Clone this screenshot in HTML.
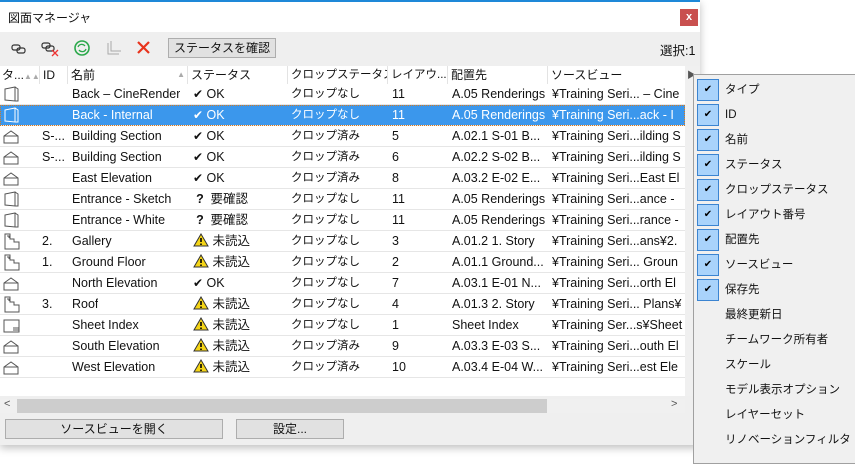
<!DOCTYPE html>
<html><head><meta charset="utf-8"><style>
*{box-sizing:border-box;margin:0;padding:0}
body{width:855px;height:455px;overflow:hidden;background:#fff;font-family:"Liberation Sans","Noto Sans CJK JP",sans-serif;font-size:12.5px;color:#111;position:relative}
.win{position:absolute;left:0;top:0;width:700px;height:445px;background:#efefef;border-top:2px solid #1e88d8;box-shadow:0 3px 8px rgba(0,0,0,.25)}
.title{position:absolute;left:0;top:0;width:700px;height:30px;background:#fff}
.title span{position:absolute;left:8px;top:7px;font-size:12px}
.close{position:absolute;left:680px;top:7px;width:18px;height:17px;background:#c9504f;color:#fff;font-size:11px;text-align:center;line-height:16px;font-weight:bold}
.btn{position:absolute;background:#e1e1e1;border:1px solid #adadad;text-align:center;font-size:12px}
.grid{position:absolute;left:0;top:64px;width:700px;height:330px;background:#fff}
.hdr{position:absolute;top:0;height:18px;font-size:12px;line-height:18px;border-right:1px solid #e3e3e3;padding-left:3px;white-space:nowrap;overflow:hidden}
.row{position:absolute;left:0;width:685px;height:21px;border-bottom:1px solid #e6e6e6}
.row div{position:absolute;top:0;line-height:20px;white-space:nowrap;overflow:hidden;font-size:12.5px}
.sel{background:#3b97ec;color:#fff;outline:1px dotted #d67a20;outline-offset:-1px}
.menu{position:absolute;left:693px;top:74px;width:170px;height:390px;background:#f0f0f0;border:1px solid #a0a0a0}
.mi{position:absolute;left:31px;font-size:11.5px;line-height:22px}
.cb{position:absolute;left:3px;width:22px;height:22px;background:#a9d3fb;border:1px solid #3b84d1;text-align:center;line-height:20px;font-size:10px;color:#000}
</style></head><body>
<div class="win">
<div class="title"><span>図面マネージャ</span><div class="close">x</div></div>
<svg style="position:absolute;left:8px;top:36px" width="150" height="20">
<g fill="none" stroke="#333" stroke-width="1.2"><rect x="4" y="7" width="8" height="5" rx="2"/><rect x="9" y="10" width="8" height="5" rx="2"/>
<rect x="34" y="5" width="8" height="5" rx="2"/><rect x="38" y="8" width="8" height="5" rx="2"/></g>
<path d="M44 12l6 6M50 12l-6 6" stroke="#e33" stroke-width="1.3"/>
<circle cx="74" cy="10" r="7" fill="none" stroke="#2aa84a" stroke-width="1.6"/><path d="M70 9a4 4 0 0 1 7-1M78 11a4 4 0 0 1-7 1" stroke="#2aa84a" stroke-width="1.3" fill="none"/>
<path d="M100 5v11h11M103 3v10h10" stroke="#aaa" fill="none"/>
<path d="M130 4l11 11M141 4l-11 11" stroke="#e8331c" stroke-width="2.2"/></svg>
<div class="btn" style="left:168px;top:36px;width:108px;height:20px;line-height:18px">ステータスを確認</div>
<div style="position:absolute;left:660px;top:38px">選択:1</div>
<div class="grid">
<div class="hdr" style="left:0;width:40px;padding-left:2px">タ...<span style="color:#aaa;font-size:8px">▲▲</span></div>
<div class="hdr" style="left:40px;width:28px">ID</div>
<div class="hdr" style="left:68px;width:120px">名前<span style="position:absolute;right:2px;color:#aaa;font-size:8px">▲</span></div>
<div class="hdr" style="left:188px;width:100px">ステータス</div>
<div class="hdr" style="left:288px;width:100px;font-size:11.5px">クロップステータス</div>
<div class="hdr" style="left:388px;width:60px;font-size:11.5px">レイアウ...</div>
<div class="hdr" style="left:448px;width:100px">配置先</div>
<div class="hdr" style="left:548px;width:137px;border:none">ソースビュー</div>
<div style="position:absolute;left:685px;top:0;width:15px;height:330px;background:#f0f0f0"></div>
<div style="position:absolute;left:687px;top:2px;font-size:9px;color:#555">▶</div>
</div>
<div id="rows" style="position:absolute;left:0;top:82px"></div>
<div style="position:absolute;left:0;top:397px;width:685px;height:14px;background:#f0f0f0"></div>
<div style="position:absolute;left:17px;top:397px;width:530px;height:14px;background:#cdcdcd"></div>
<div style="position:absolute;left:4px;top:396px;font-size:11px;color:#555">&lt;</div>
<div style="position:absolute;left:671px;top:396px;font-size:11px;color:#555">&gt;</div>
<div class="btn" style="left:5px;top:417px;width:218px;height:20px;line-height:18px">ソースビューを開く</div>
<div class="btn" style="left:236px;top:417px;width:108px;height:20px;line-height:18px">設定...</div>
</div>
<div class="menu" id="menu"></div>
<script>
var R=[["c","","Back – CineRender","ok","クロップなし","11","A.05 Renderings","¥Training Seri... – Cine"],
["c","","Back - Internal","ok","クロップなし","11","A.05 Renderings","¥Training Seri...ack - I"],
["h","S-...","Building Section","ok","クロップ済み","5","A.02.1 S-01 B...","¥Training Seri...ilding S"],
["h","S-...","Building Section","ok","クロップ済み","6","A.02.2 S-02 B...","¥Training Seri...ilding S"],
["h","","East Elevation","ok","クロップ済み","8","A.03.2 E-02 E...","¥Training Seri...East El"],
["c","","Entrance - Sketch","q","クロップなし","11","A.05 Renderings","¥Training Seri...ance -"],
["c","","Entrance - White","q","クロップなし","11","A.05 Renderings","¥Training Seri...rance -"],
["p","2.","Gallery","w","クロップなし","3","A.01.2 1. Story","¥Training Seri...ans¥2."],
["p","1.","Ground Floor","w","クロップなし","2","A.01.1 Ground...","¥Training Seri... Groun"],
["h","","North Elevation","ok","クロップなし","7","A.03.1 E-01 N...","¥Training Seri...orth El"],
["p","3.","Roof","w","クロップなし","4","A.01.3 2. Story","¥Training Seri... Plans¥"],
["s","","Sheet Index","w","クロップなし","1","Sheet Index","¥Training Ser...s¥Sheet"],
["h","","South Elevation","w","クロップ済み","9","A.03.3 E-03 S...","¥Training Seri...outh El"],
["h","","West Elevation","w","クロップ済み","10","A.03.4 E-04 W...","¥Training Seri...est Ele"]];
var ic={c:'<path d="M3 4l10-2v14l-10-1z M13 2l3 2v12l-3 0" fill="none" stroke="#555"/>',
h:'<path d="M2 9l7-5 7 5v7H2z M2 9h14" fill="none" stroke="#555"/>',
p:'<path d="M3 2h5v5h4v3h5v7H3z M5 4h2v2" fill="none" stroke="#555"/>',
s:'<path d="M2 4h15v12H2z M11 12h6M11 14h6" fill="none" stroke="#555"/>'};
var h='';R.forEach(function(r,i){var sel=i==1;
var st=r[3]=="ok"?'<span style="font-size:12px">✔</span> OK':r[3]=="q"?'<b style="display:inline-block;width:14px;text-align:center">?</b> 要確認':'<svg width="16" height="14" style="vertical-align:-2px"><path d="M8 1L15 13H1z" fill="#f5d516" stroke="#333"/><path d="M8 5v4M8 10.5v1.5" stroke="#000" stroke-width="1.6"/></svg> 未読込';
h+='<div class="row'+(sel?' sel':'')+'" style="top:'+(i*21)+'px"><div style="left:2px;top:1px"><svg width="20" height="19">'+ic[r[0]].replace(/#555/g,sel?'#fff':'#555')+'</svg></div><div style="left:42px">'+r[1]+'</div><div style="left:72px">'+r[2]+'</div><div style="left:193px">'+st+'</div><div style="left:291px;font-size:11.5px">'+r[4]+'</div><div style="left:392px">'+r[5]+'</div><div style="left:452px;width:96px">'+r[6]+'</div><div style="left:552px;width:133px">'+r[7]+'</div></div>';});
document.getElementById('rows').innerHTML=h;
var M=["タイプ","ID","名前","ステータス","クロップステータス","レイアウト番号","配置先","ソースビュー","保存先","最終更新日","チームワーク所有者","スケール","モデル表示オプション","レイヤーセット","リノベーションフィルタ"];
var m='';M.forEach(function(t,i){var y=4+i*25;if(i<9)m+='<div class="cb" style="top:'+y+'px">✔</div>';m+='<div class="mi" style="top:'+y+'px">'+t+'</div>';});
document.getElementById('menu').innerHTML=m;
</script>
</body></html>
